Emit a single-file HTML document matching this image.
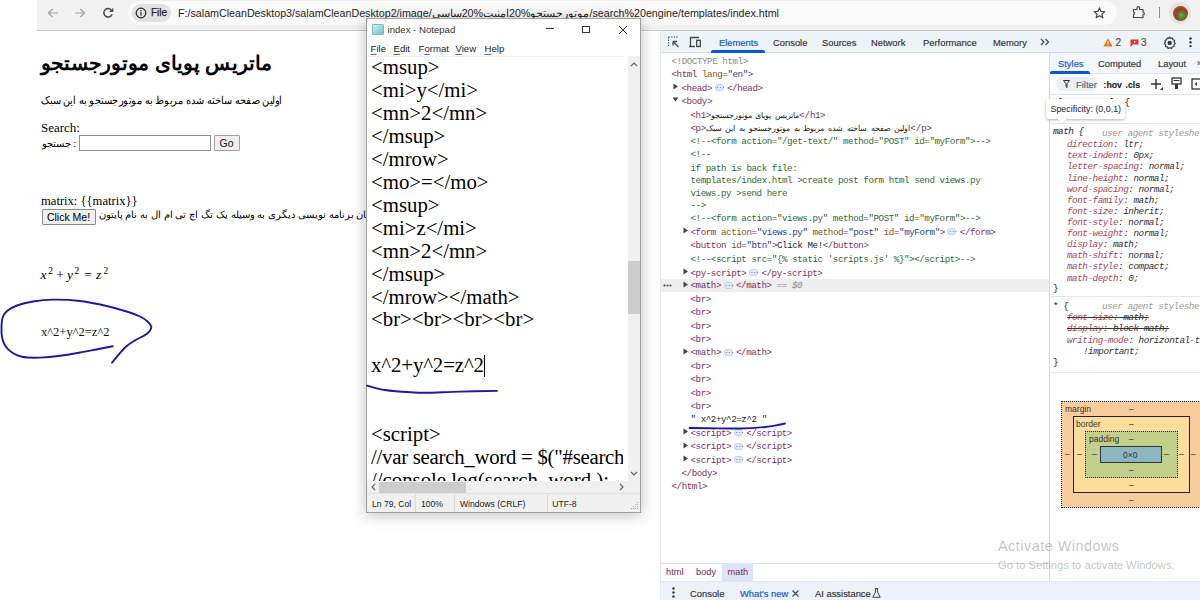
<!DOCTYPE html>
<html><head><meta charset="utf-8">
<style>
*{margin:0;padding:0;box-sizing:border-box}
html,body{width:1200px;height:600px;overflow:hidden;background:#fff;position:relative;font-family:"Liberation Sans",sans-serif}
.a{position:absolute;white-space:nowrap}
/* browser toolbar */
#tb{left:37px;top:0;width:1163px;height:31px;background:#f1f1f1;border-bottom:1px solid #c9c9c9}
#omni{left:91px;top:1px;width:989px;height:24px;background:#f9f9f9;border-radius:12px}
#chip{left:95px;top:4px;width:39px;height:18px;background:#e1e1e1;border-radius:9px}
.url{font-size:10.7px;color:#1f1f1f;top:7px;left:178px}
/* page */
.iso{unicode-bidi:isolate}
.serif{font-family:"Liberation Serif",serif}
/* notepad */
#np{left:365.5px;top:18px;width:275.5px;height:495px;background:#fff;border:1px solid #a0a0a0;box-shadow:0 2px 14px rgba(0,0,0,.26)}
.npm{font-size:9.6px;color:#222}
.npm u{text-decoration-thickness:0.6px;text-underline-offset:1.5px;text-decoration-color:#666}
.nps{font-size:8.6px;color:#222}
.npt{font-family:"Liberation Serif",serif;font-size:20.8px;color:#000;left:6px}
/* devtools */
#dt{left:660px;top:31px;width:540px;height:569px;background:#fff;border-left:1px solid #e6ebef}
.mono{font-family:"Liberation Mono",monospace;font-size:9.2px;letter-spacing:-0.43px}
.dtab{font-size:9.4px;color:#333;-webkit-text-stroke:0.15px currentColor}
.r{line-height:13.277px}
.dots{display:inline-block;width:9px;height:7px;margin:0 3.5px 0 2.5px;vertical-align:1.5px;background:#e3eaf7;border:1px solid #c5d3ea;border-radius:3px;font-size:6px;line-height:5px;text-align:center;color:#2b5fb6;font-weight:bold;letter-spacing:-0.5px}
.arx{font-family:"Liberation Sans",sans-serif;color:#222}
.tx{color:#1f1f1f}
.tg{color:#7a2f63}.at{color:#8a5322}.av{color:#1d3f8f}.cm{color:#2f6b34}.gr{color:#8a8a8a}
.sp{font-family:"Liberation Mono",monospace;font-size:9.3px;letter-spacing:-0.47px;font-style:italic;line-height:11.2px}
.pn{color:#b0445a}.pv{color:#303030}
.bc{font-size:9.3px;color:#80245f}
.bm{font-size:8.5px;color:#333}
</style></head><body>

<!-- ============ BROWSER TOOLBAR ============ -->
<div id="tb" class="a">
  <div id="omni" class="a"></div>
</div>
<div class="a url">F:/salamCleanDesktop3/salamCleanDesktop2/image/موتورجستجو%20امنیت%20ساسی/search%20engine/templates/index.html</div>

<!-- ============ PAGE ============ -->
<div class="a" id="h1" style="left:41px;top:50.5px;font-size:20px;transform:scaleX(1.02);transform-origin:0 0;font-weight:bold;color:#000">ماتریس پویای موتورجستجو</div>
<div class="a" id="p1" style="left:41px;top:94px;font-size:10.8px;transform:scaleX(0.893);transform-origin:0 0;color:#000">اولین صفحه ساخته شده مربوط به موتورجستجو به این سبک</div>
<div class="a serif" id="srch" style="left:41px;top:120px;font-size:13px;color:#000">Search:</div>
<div class="a" id="jst" style="left:41.5px;top:138px;font-size:9.6px;color:#000">جستجو :</div>
<div class="a" id="inp" style="left:79px;top:135px;width:132px;height:16px;border:1px solid #8f8f8f;background:#fff"></div>
<div class="a" id="go" style="left:213.5px;top:135px;width:26px;height:16px;border:1px solid #a0a0a0;background:#efefef;border-radius:1px;font-size:10.5px;text-align:center;line-height:14px;color:#111">Go</div>
<div class="a serif" id="mtx" style="left:41px;top:194px;font-size:12.6px;color:#000">matrix: {{matrix}}</div>
<div class="a" id="clk" style="left:41.5px;top:208.5px;width:54px;height:16px;border:1px solid #8a8a8a;background:#efefef;border-radius:1px;font-size:10.5px;text-align:center;line-height:14px;color:#000">Click Me!</div>
<div class="a" id="ar2" style="left:98.5px;top:208.5px;font-size:10px;color:#000;direction:rtl;unicode-bidi:isolate">زبان برنامه نویسی دیگری به وسیله یک تگ اچ تی ام ال به نام پایتون</div>
<div id="math"><div class="a serif" style="left:40.5px;top:267.69px;font-size:13.5px;line-height:13.5px;font-style:italic;color:#000">x</div><div class="a serif" style="left:48.3px;top:265.93px;font-size:9.4px;line-height:9.4px;color:#000;margin-top:0.8px">2</div><div class="a serif" style="left:56.3px;top:267.69px;font-size:13.5px;line-height:13.5px;color:#000">+</div><div class="a serif" style="left:67px;top:267.69px;font-size:13.5px;line-height:13.5px;font-style:italic;color:#000">y</div><div class="a serif" style="left:74.6px;top:265.93px;font-size:9.4px;line-height:9.4px;color:#000;margin-top:0.8px">2</div><div class="a serif" style="left:84.3px;top:267.69px;font-size:13.5px;line-height:13.5px;color:#000">=</div><div class="a serif" style="left:96px;top:267.69px;font-size:13.5px;line-height:13.5px;font-style:italic;color:#000">z</div><div class="a serif" style="left:103.6px;top:265.93px;font-size:9.4px;line-height:9.4px;color:#000;margin-top:0.8px">2</div></div>
<div class="a serif" id="txt" style="left:41px;top:324.5px;font-size:12.5px;color:#111">x^2+y^2=z^2</div>

<!-- ============ NOTEPAD ============ -->
<div id="np" class="a">
  <div class="a" style="left:5px;top:5px;width:12px;height:11px;background:linear-gradient(135deg,#cfeef2,#6fc3cf);border:1px solid #7fb7c3;border-radius:1px"></div>
  <div class="a" style="left:21px;top:5px;font-size:9.6px;color:#333">index - Notepad</div>
  <div class="a" style="left:179px;top:9px;width:8px;height:1px;background:#333"></div>
  <div class="a" style="left:215px;top:7px;width:8px;height:7px;border:1px solid #333"></div>
  <svg class="a" style="left:251px;top:6px" width="10" height="10" viewBox="0 0 10 10"><path d="M1 1L9 9M9 1L1 9" stroke="#333" stroke-width="1" fill="none"/></svg>
  <div class="a npm" style="left:4px;top:24px"><u>F</u>ile</div>
  <div class="a npm" style="left:27px;top:24px"><u>E</u>dit</div>
  <div class="a npm" style="left:52px;top:24px">F<u>o</u>rmat</div>
  <div class="a npm" style="left:89px;top:24px"><u>V</u>iew</div>
  <div class="a npm" style="left:118px;top:24px"><u>H</u>elp</div>
  <div class="a" style="left:0;top:37px;width:272px;height:1px;background:#f0f0f0"></div>
  <div class="a" id="npc" style="left:0;top:37px;width:256px;height:425px;overflow:hidden">
    <div class="npt" style="position:absolute;left:4.5px;top:0px;line-height:22.95px;white-space:pre">&lt;msup&gt;
&lt;mi&gt;y&lt;/mi&gt;
&lt;mn&gt;2&lt;/mn&gt;
&lt;/msup&gt;
&lt;/mrow&gt;
&lt;mo&gt;=&lt;/mo&gt;
&lt;msup&gt;
&lt;mi&gt;z&lt;/mi&gt;
&lt;mn&gt;2&lt;/mn&gt;
&lt;/msup&gt;
&lt;/mrow&gt;&lt;/math&gt;
&lt;br&gt;&lt;br&gt;&lt;br&gt;&lt;br&gt;

<span style="letter-spacing:-0.1px">x^2+y^2=z^2</span>


&lt;script&gt;
<span style="letter-spacing:-0.26px">//var search_word = $("#search_word").val();</span>
//console.log(search_word );</div>
    <div class="a" id="caret" style="left:117px;top:298.5px;width:1px;height:22px;background:#000"></div>
  </div>
  <!-- v scrollbar -->
  <div class="a" style="left:261px;top:37px;width:12px;height:425px;background:#f0f0f0"></div>
  <svg class="a" style="left:263px;top:42px" width="8" height="6" viewBox="0 0 8 6"><path d="M1 5L4 2L7 5" stroke="#606060" stroke-width="1.1" fill="none"/></svg>
  <div class="a" style="left:261px;top:242px;width:12px;height:53px;background:#cdcdcd"></div>
  <svg class="a" style="left:263px;top:452px" width="8" height="6" viewBox="0 0 8 6"><path d="M1 1L4 4L7 1" stroke="#606060" stroke-width="1.1" fill="none"/></svg>
  <div class="a" style="left:256px;top:37px;width:5px;height:425px;background:#fff"></div>
  <!-- h scrollbar -->
  <div class="a" style="left:0;top:462px;width:273px;height:12px;background:#f0f0f0"></div>
  <svg class="a" style="left:3px;top:464px" width="6" height="8" viewBox="0 0 6 8"><path d="M5 1L2 4L5 7" stroke="#606060" stroke-width="1.1" fill="none"/></svg>
  <div class="a" style="left:12px;top:463px;width:87px;height:11px;background:#cdcdcd"></div>
  <svg class="a" style="left:252px;top:464px" width="6" height="8" viewBox="0 0 6 8"><path d="M1 1L4 4L1 7" stroke="#606060" stroke-width="1.1" fill="none"/></svg>
  <!-- status bar -->
  <div class="a" style="left:0;top:474px;width:273px;height:19px;background:#f0f0f0;border-top:1px solid #e2e2e2"></div>
  <div class="a nps" style="left:5.5px;top:480px">Ln 79, Col</div>
  <div class="a" style="left:48px;top:475px;width:1px;height:18px;background:#dadada"></div>
  <div class="a nps" style="left:54.5px;top:480px">100%</div>
  <div class="a" style="left:87px;top:475px;width:1px;height:18px;background:#dadada"></div>
  <div class="a nps" style="left:93.5px;top:480px">Windows (CRLF)</div>
  <div class="a" style="left:180px;top:475px;width:1px;height:18px;background:#dadada"></div>
  <div class="a nps" style="left:185.7px;top:480px">UTF-8</div>
  <svg class="a" style="left:264px;top:482px" width="8" height="9" viewBox="0 0 8 9"><g fill="#a8a8a8"><rect x="6" y="1" width="1" height="1"/><rect x="4" y="3" width="1" height="1"/><rect x="6" y="3" width="1" height="1"/><rect x="2" y="5" width="1" height="1"/><rect x="4" y="5" width="1" height="1"/><rect x="6" y="5" width="1" height="1"/><rect x="0" y="7" width="1" height="1"/><rect x="2" y="7" width="1" height="1"/><rect x="4" y="7" width="1" height="1"/><rect x="6" y="7" width="1" height="1"/></g></svg>
</div>

<!-- ============ DEVTOOLS ============ -->
<div id="dt" class="a"></div>
<!-- tab bar -->
<div class="a" style="left:661px;top:31px;width:539px;height:22px;background:#eef2f9;border-bottom:1px solid #d5dbe5"></div>
<div class="a" style="left:711px;top:50px;width:54px;height:3px;background:#0b57d0;border-radius:2px 2px 0 0"></div>
<div class="a dtab" style="left:719px;top:37px;color:#0b57d0">Elements</div>
<div class="a dtab" style="left:773px;top:37px">Console</div>
<div class="a dtab" style="left:822px;top:37px">Sources</div>
<div class="a dtab" style="left:871px;top:37px">Network</div>
<div class="a dtab" style="left:923px;top:37px">Performance</div>
<div class="a dtab" style="left:993px;top:37px">Memory</div>
<!-- elements tree -->
<!-- styles pane -->
<div class="a" style="left:1049px;top:53px;width:1px;height:528px;background:#d5dbe5"></div>
<div class="a" style="left:1050px;top:53px;width:150px;height:21px;background:#f3f6fb;border-bottom:1px solid #dde3ec"></div>
<div class="a" style="left:1050px;top:71px;width:40px;height:3px;background:#0b57d0;border-radius:2px 2px 0 0"></div>
<div class="a dtab" style="left:1058px;top:58px;color:#0b57d0">Styles</div>
<div class="a dtab" style="left:1098px;top:58px">Computed</div>
<div class="a dtab" style="left:1158px;top:58px">Layout</div>
<div class="a dtab" style="left:1197px;top:57px">&raquo;</div>
<div class="a" style="left:1050px;top:94px;width:150px;height:1px;background:#dde3ec"></div>
<div class="a" style="left:1056px;top:77px;width:42px;height:14px;background:#e9eef7;border-radius:7px"></div>
<svg class="a" style="left:1063px;top:80px" width="7" height="8" viewBox="0 0 7 8"><path d="M0.5 0.5H6.5L4 3.8V7.5L3 6.8V3.8Z" fill="none" stroke="#333" stroke-width="1"/></svg>
<div class="a dtab" style="left:1076px;top:79px;color:#5f6368">Filter</div>
<div class="a dtab" style="left:1103.5px;top:79.5px;color:#222;font-size:8.7px;font-weight:bold">:hov</div>
<div class="a dtab" style="left:1125.5px;top:79.5px;color:#222;font-size:8.7px;font-weight:bold">.cls</div>
<svg class="a" style="left:1150px;top:78px" width="14" height="13" viewBox="0 0 14 13"><path d="M6 1V11M1 6H11" stroke="#333" stroke-width="1.4"/><path d="M13 9V12H10Z" fill="#333"/></svg>
<svg class="a" style="left:1171px;top:77px" width="11" height="13" viewBox="0 0 11 13"><rect x="1" y="1" width="9" height="6" fill="none" stroke="#333" stroke-width="1.3"/><path d="M2.5 3.5H8.5" stroke="#333"/><rect x="4" y="7" width="3" height="5" fill="#333"/></svg>
<svg class="a" style="left:1191px;top:78px" width="10" height="12" viewBox="0 0 10 12"><rect x="1" y="1" width="12" height="10" fill="none" stroke="#333" stroke-width="1.3"/><path d="M6 4L3.5 6L6 8Z" fill="#333"/></svg>
<div class="a sp" style="left:1053px;top:97px;color:#222;font-style:normal">element.style {</div>
<div class="a" style="left:1050px;top:123px;width:150px;height:1px;background:#e2e6ed"></div>
<!-- tooltip -->
<div class="a" style="left:1046px;top:99px;width:79px;height:20px;background:#fff;border-radius:3px;box-shadow:0 1px 3px rgba(0,0,0,.3)"></div>
<svg class="a" style="left:1056px;top:118px" width="12" height="6" viewBox="0 0 12 6"><path d="M0 0L6 6L12 0Z" fill="#fff"/><path d="M0 0L6 6L12 0" fill="none" stroke="#d0d0d0" stroke-width="0.6"/></svg>
<div class="a" style="left:1050.5px;top:103.5px;font-size:8.9px;color:#222">Specificity: (0,0,1)</div>
<!-- math rule -->
<div class="a sp" style="left:1053px;top:125.5px;color:#222">math {</div>
<div class="a sp" style="left:1102px;top:127.5px;color:#9a9a9a">user agent styleshe</div>
<div class="a sp" style="left:1067px;top:139.1px"><span class="pn">direction</span><span class="pv">: ltr;</span></div>
<div class="a sp" style="left:1067px;top:150.2px"><span class="pn">text-indent</span><span class="pv">: 0px;</span></div>
<div class="a sp" style="left:1067px;top:161.3px"><span class="pn">letter-spacing</span><span class="pv">: normal;</span></div>
<div class="a sp" style="left:1067px;top:172.5px"><span class="pn">line-height</span><span class="pv">: normal;</span></div>
<div class="a sp" style="left:1067px;top:183.6px"><span class="pn">word-spacing</span><span class="pv">: normal;</span></div>
<div class="a sp" style="left:1067px;top:194.7px"><span class="pn">font-family</span><span class="pv">: math;</span></div>
<div class="a sp" style="left:1067px;top:205.8px"><span class="pn">font-size</span><span class="pv">: inherit;</span></div>
<div class="a sp" style="left:1067px;top:216.9px"><span class="pn">font-style</span><span class="pv">: normal;</span></div>
<div class="a sp" style="left:1067px;top:228.1px"><span class="pn">font-weight</span><span class="pv">: normal;</span></div>
<div class="a sp" style="left:1067px;top:239.2px"><span class="pn">display</span><span class="pv">: math;</span></div>
<div class="a sp" style="left:1067px;top:250.3px"><span class="pn">math-shift</span><span class="pv">: normal;</span></div>
<div class="a sp" style="left:1067px;top:261.4px"><span class="pn">math-style</span><span class="pv">: compact;</span></div>
<div class="a sp" style="left:1067px;top:272.5px"><span class="pn">math-depth</span><span class="pv">: 0;</span></div>
<div class="a sp" style="left:1053px;top:283px;color:#222;font-style:normal">}</div>
<div class="a" style="left:1050px;top:296px;width:150px;height:1px;background:#e2e6ed"></div>
<div class="a sp" style="left:1053px;top:301px;color:#222;font-style:normal">* {</div>
<div class="a sp" style="left:1102px;top:301px;color:#9a9a9a">user agent styleshe</div>
<div class="a sp" style="left:1067px;top:312.3px;text-decoration:line-through;text-decoration-color:#333"><span class="pn">font-size</span><span class="pv">: math;</span></div>
<div class="a sp" style="left:1067px;top:323.4px;text-decoration:line-through;text-decoration-color:#333"><span class="pn">display</span><span class="pv">: block math;</span></div>
<div class="a sp" style="left:1067px;top:335.2px"><span class="pn">writing-mode</span><span class="pv">: horizontal-tb</span></div>
<div class="a sp" style="left:1083px;top:345.6px"><span class="pv">!important;</span></div>
<div class="a sp" style="left:1053px;top:356.7px;color:#222;font-style:normal">}</div>
<div class="a" style="left:1050px;top:372px;width:150px;height:1px;background:#e2e6ed"></div>
<!-- box model -->
<div class="a" style="left:1061px;top:401px;width:150px;height:107px;background:#f9cc9d;border:1px dotted #222"></div>
<div class="a" style="left:1073px;top:416px;width:117px;height:77px;background:#fddd9b;border:1px solid #222"></div>
<div class="a" style="left:1085px;top:431px;width:93px;height:47px;background:#c3d08b;border:1px dotted #222"></div>
<div class="a" style="left:1100px;top:446px;width:62px;height:17px;background:#8cb6c0;border:1px solid #333"></div>
<div class="a bm" style="left:1065px;top:404px">margin</div>
<div class="a bm" style="left:1076px;top:419px">border</div>
<div class="a bm" style="left:1089px;top:434px">padding</div>
<div class="a bm" style="left:1123px;top:450px">0&times;0</div>
<div class="a bm" style="left:1129px;top:404px">&ndash;</div>
<div class="a bm" style="left:1129px;top:419px">&ndash;</div>
<div class="a bm" style="left:1129px;top:434px">&ndash;</div>
<div class="a bm" style="left:1129px;top:465px">&ndash;</div>
<div class="a bm" style="left:1129px;top:480px">&ndash;</div>
<div class="a bm" style="left:1129px;top:495px">&ndash;</div>
<div class="a bm" style="left:1065px;top:449px">&ndash;</div>
<div class="a bm" style="left:1077px;top:449px">&ndash;</div>
<div class="a bm" style="left:1092px;top:449px">&ndash;</div>
<div class="a bm" style="left:1164px;top:449px">&ndash;</div>
<div class="a bm" style="left:1179px;top:449px">&ndash;</div>
<div class="a bm" style="left:1191px;top:449px">&ndash;</div>
<!-- breadcrumbs -->
<div class="a" style="left:661px;top:563px;width:388px;height:1px;background:#dde3ec"></div>
<div class="a" style="left:722px;top:564px;width:31px;height:17px;background:#dbe5f7"></div>
<div class="a bc" style="left:666px;top:567px">html</div>
<div class="a bc" style="left:696px;top:567px">body</div>
<div class="a bc" style="left:727.5px;top:567px">math</div>
<!-- drawer -->
<div class="a" style="left:661px;top:581px;width:539px;height:19px;background:#edf1f9;border-top:1px solid #e3e8f0"></div>
<svg class="a" style="left:672px;top:587px" width="3" height="11" viewBox="0 0 3 11"><circle cx="1.5" cy="1.5" r="1.2" fill="#333"/><circle cx="1.5" cy="5.5" r="1.2" fill="#333"/><circle cx="1.5" cy="9.5" r="1.2" fill="#333"/></svg>
<div class="a dtab" style="left:690px;top:588px">Console</div>
<div class="a dtab" style="left:740px;top:588px;color:#0b57d0">What's new</div>
<svg class="a" style="left:792px;top:590px" width="7" height="7" viewBox="0 0 7 7"><path d="M0.5 0.5L6.5 6.5M6.5 0.5L0.5 6.5" stroke="#444" stroke-width="1.1"/></svg>
<div class="a dtab" style="left:815px;top:588px">AI assistance</div>
<svg class="a" style="left:872px;top:588px" width="9" height="10" viewBox="0 0 9 10"><path d="M3 0.5H6M3.5 0.5V4L0.8 9.3H8.2L5.5 4V0.5" fill="none" stroke="#444" stroke-width="1"/></svg>
<!-- activate windows -->
<div class="a" id="aw1" style="left:998px;top:538px;font-size:14.4px;letter-spacing:0.5px;color:rgba(140,140,140,.5)">Activate Windows</div>
<div class="a" id="aw2" style="left:998px;top:558.5px;font-size:11.2px;color:rgba(140,140,140,.5)">Go to Settings to activate Windows.</div>
<!-- toolbar icons -->
<svg class="a" style="left:47px;top:7px" width="12" height="12" viewBox="0 0 12 12"><path d="M11 6H1.5M5.5 2L1.5 6L5.5 10" fill="none" stroke="#a3a3a3" stroke-width="1.2"/></svg>
<svg class="a" style="left:74px;top:7px" width="12" height="12" viewBox="0 0 12 12"><path d="M1 6H10.5M6.5 2L10.5 6L6.5 10" fill="none" stroke="#a3a3a3" stroke-width="1.2"/></svg>
<svg class="a" style="left:102px;top:7px" width="13" height="12" viewBox="0 0 13 12"><path d="M10.2 7.2A4.3 4.3 0 1 1 9.3 2.8" fill="none" stroke="#474747" stroke-width="1.5"/><path d="M11.3 0.8V5H7.1Z" fill="#474747"/></svg>
<div class="a" style="left:132px;top:4px;width:39px;height:18px;background:#e2e2e2;border-radius:9px"></div>
<svg class="a" style="left:135px;top:7px" width="12" height="12" viewBox="0 0 12 12"><circle cx="6" cy="6" r="4.8" fill="none" stroke="#2a2a2a" stroke-width="1.2"/><rect x="5.4" y="5" width="1.2" height="3.6" fill="#2a2a2a"/><rect x="5.4" y="3" width="1.2" height="1.2" fill="#2a2a2a"/></svg>
<div class="a" style="left:151px;top:7px;font-size:10px;color:#1f1f1f;-webkit-text-stroke:0.25px #1f1f1f">File</div>
<svg class="a" style="left:1093px;top:7px" width="13" height="12" viewBox="0 0 13 12"><path d="M6.5 0.9L8 4.4L11.7 4.7L8.9 7.1L9.8 10.8L6.5 8.8L3.2 10.8L4.1 7.1L1.3 4.7L5 4.4Z" fill="none" stroke="#474747" stroke-width="1.2" stroke-linejoin="round"/></svg>
<svg class="a" style="left:1132px;top:6px" width="14" height="13" viewBox="0 0 14 13"><path d="M1.5 3.5H5V2A1.3 1.3 0 0 1 7.6 2V3.5H11V6.2A1.3 1.3 0 0 1 11 8.8V11.5H1.5V8.6A1.4 1.4 0 0 0 1.5 6Z" fill="none" stroke="#474747" stroke-width="1.2" stroke-linejoin="round"/></svg>
<div class="a" style="left:1158.5px;top:7px;width:1.2px;height:11px;background:#8a8a8a"></div>
<div class="a" style="left:1169px;top:2px;width:22px;height:22px;border-radius:50%;background:#e4e4e4"></div>
<div class="a" style="left:1172.5px;top:5.5px;width:15px;height:15px;border-radius:50%;background:radial-gradient(circle at 58% 62%,#7fb04a 0,#4f8a2e 22%,#9c3a22 48%,#b9472a 70%,#4a2418 100%)"></div>
<!-- devtools tab icons -->
<svg class="a" style="left:667px;top:36px" width="13" height="12" viewBox="0 0 13 12"><path d="M1.5 1H11.5M1.5 1V11" fill="none" stroke="#474747" stroke-width="1.1" stroke-dasharray="1.3 1.3"/><path d="M11.5 11L6 5.5M6 5.5H10M6 5.5V9.5" fill="none" stroke="#474747" stroke-width="1.3"/></svg>
<svg class="a" style="left:688px;top:36px" width="14" height="12" viewBox="0 0 14 12"><path d="M11 1.5H2.5V10.5M1 10.5H7" fill="none" stroke="#474747" stroke-width="1.3"/><rect x="8.7" y="4.3" width="3.6" height="6.2" fill="none" stroke="#474747" stroke-width="1.3"/></svg>
<svg class="a" style="left:1040px;top:38px" width="10" height="8" viewBox="0 0 10 8"><path d="M1 1L4 4L1 7M5.5 1L8.5 4L5.5 7" fill="none" stroke="#474747" stroke-width="1.2"/></svg>
<svg class="a" style="left:1103px;top:38px" width="10" height="9" viewBox="0 0 10 9"><path d="M5 0.5L9.6 8.5H0.4Z" fill="#e8710a"/><rect x="4.5" y="3" width="1" height="2.8" fill="#fff"/><rect x="4.5" y="6.5" width="1" height="1" fill="#fff"/></svg>
<div class="a dtab" style="left:1115.5px;top:36.5px;font-size:10px;color:#474747">2</div>
<svg class="a" style="left:1130px;top:39px" width="9" height="8" viewBox="0 0 9 8"><path d="M0.5 0.5H8.5V5.5H3L0.5 7.8Z" fill="#dc362e"/><rect x="4" y="2" width="1.2" height="1.8" fill="#fff"/></svg>
<div class="a dtab" style="left:1141px;top:36.5px;font-size:10px;color:#5a4a55">3</div>
<svg class="a" style="left:1163px;top:35.5px" width="13" height="13" viewBox="0 0 13 13"><path d="M6.5 1L7.6 2.4L9.4 2L9.9 3.7L11.6 4.3L11.2 6.1L12.3 7.4L11 8.7L11.2 10.5L9.4 10.8L8.5 12.4L6.8 11.7L5.1 12.4L4.2 10.8L2.4 10.5L2.6 8.7L1.3 7.4L2.4 6.1L2 4.3L3.7 3.7L4.2 2L6 2.4Z" fill="none" stroke="#3a3a3a" stroke-width="1.2" stroke-linejoin="round"/><circle cx="6.7" cy="6.9" r="2.2" fill="#3a3a3a"/></svg>
<svg class="a" style="left:1189px;top:37px" width="3" height="11" viewBox="0 0 3 11"><circle cx="1.5" cy="1.5" r="1.2" fill="#333"/><circle cx="1.5" cy="5.3" r="1.2" fill="#333"/><circle cx="1.5" cy="9.1" r="1.2" fill="#333"/></svg>
<!--ROWS-->
<div class="a" style="left:661px;top:279.00px;width:388px;height:13.28px;background:#eeeeee"></div>
<svg class="a" style="left:662.5px;top:284.00px" width="9" height="3" viewBox="0 0 9 3"><circle cx="1.5" cy="1.5" r="1.05" fill="#444"/><circle cx="4.5" cy="1.5" r="1.05" fill="#444"/><circle cx="7.5" cy="1.5" r="1.05" fill="#444"/></svg>
<div class="a mono r" style="left:671.5px;top:55.41px;"><span class="gr">&lt;!DOCTYPE html&gt;</span></div>
<div class="a mono r" style="left:671.5px;top:68.41px;"><span class="tg">&lt;html</span> <span class="at">lang</span><span class="tg">=</span><span class="av">"en"</span><span class="tg">&gt;</span></div>
<svg class="a" style="left:673px;top:83.00px" width="6" height="7" viewBox="0 0 6 7"><path d="M0.5 0.5L5 3.5L0.5 6.5Z" fill="#444"/></svg>
<div class="a mono r" style="left:681.5px;top:81.91px;"><span class="tg">&lt;head&gt;</span><span class="dots">&middot;&middot;&middot;</span><span class="tg">&lt;/head&gt;</span></div>
<svg class="a" style="left:672px;top:96.50px" width="7" height="6" viewBox="0 0 7 6"><path d="M0.5 0.5L6.5 0.5L3.5 4.5Z" fill="#444"/></svg>
<div class="a mono r" style="left:681.5px;top:95.41px;"><span class="tg">&lt;body&gt;</span></div>
<div class="a mono r" style="left:690.5px;top:108.91px;"><span class="tg">&lt;h1&gt;</span><span class="arx" style="font-size:8px;word-spacing:1.3px">ماتریس پویای موتورجستجو</span><span class="tg">&lt;/h1&gt;</span></div>
<div class="a mono r" style="left:690.5px;top:121.91px;"><span class="tg">&lt;p&gt;</span><span class="arx" style="font-size:8px;word-spacing:1.5px">اولین صفحه ساخته شده مربوط به موتورجستجو به این سبک</span><span class="tg">&lt;/p&gt;</span></div>
<div class="a mono r" style="left:690.5px;top:135.41px;"><span class="cm">&lt;!--&lt;form action="/get-text/" method="POST" id="myForm"&gt;--&gt;</span></div>
<div class="a mono r" style="left:690.5px;top:148.41px;"><span class="cm">&lt;!--</span></div>
<div class="a mono r" style="left:690.5px;top:161.91px;"><span class="cm">if path is back file:</span></div>
<div class="a mono r" style="left:690.5px;top:174.21px;"><span class="cm">templates/index.html &gt;create post form html send views.py</span></div>
<div class="a mono r" style="left:690.5px;top:186.71px;"><span class="cm">views.py &gt;send here</span></div>
<div class="a mono r" style="left:690.5px;top:199.41px;"><span class="cm">--&gt;</span></div>
<div class="a mono r" style="left:690.5px;top:212.41px;"><span class="cm">&lt;!--&lt;form action="views.py" method="POST" id="myForm"&gt;--&gt;</span></div>
<svg class="a" style="left:683px;top:227.00px" width="6" height="7" viewBox="0 0 6 7"><path d="M0.5 0.5L5 3.5L0.5 6.5Z" fill="#444"/></svg>
<div class="a mono r" style="left:690.5px;top:225.91px;"><span class="tg">&lt;form</span> <span class="at">action</span><span class="tg">=</span><span class="av">"views.py"</span> <span class="at">method</span><span class="tg">=</span><span class="av">"post"</span> <span class="at">id</span><span class="tg">=</span><span class="av">"myForm"</span><span class="tg">&gt;</span><span class="dots">&middot;&middot;&middot;</span><span class="tg">&lt;/form&gt;</span></div>
<div class="a mono r" style="left:690.5px;top:239.41px;"><span class="tg">&lt;button</span> <span class="at">id</span><span class="tg">=</span><span class="av">"btn"</span><span class="tg">&gt;</span><span class="tx">Click Me!</span><span class="tg">&lt;/button&gt;</span></div>
<div class="a mono r" style="left:690.5px;top:252.91px;"><span class="cm">&lt;!--&lt;script src="{% static 'scripts.js' %}"&gt;&lt;/script&gt;--&gt;</span></div>
<svg class="a" style="left:683px;top:267.70px" width="6" height="7" viewBox="0 0 6 7"><path d="M0.5 0.5L5 3.5L0.5 6.5Z" fill="#444"/></svg>
<div class="a mono r" style="left:690.5px;top:266.61px;"><span class="tg">&lt;py-script&gt;</span><span class="dots">&middot;&middot;&middot;</span><span class="tg">&lt;/py-script&gt;</span></div>
<svg class="a" style="left:683px;top:280.50px" width="6" height="7" viewBox="0 0 6 7"><path d="M0.5 0.5L5 3.5L0.5 6.5Z" fill="#444"/></svg>
<div class="a mono r" style="left:690.5px;top:279.41px;"><span class="tg">&lt;math&gt;</span><span class="dots">&middot;&middot;&middot;</span><span class="tg">&lt;/math&gt;</span> <span class="gr" style="font-style:italic">== $0</span></div>
<div class="a mono r" style="left:690.5px;top:292.91px;"><span class="tg">&lt;br&gt;</span></div>
<div class="a mono r" style="left:690.5px;top:306.21px;"><span class="tg">&lt;br&gt;</span></div>
<div class="a mono r" style="left:690.5px;top:319.51px;"><span class="tg">&lt;br&gt;</span></div>
<div class="a mono r" style="left:690.5px;top:332.91px;"><span class="tg">&lt;br&gt;</span></div>
<svg class="a" style="left:683px;top:347.50px" width="6" height="7" viewBox="0 0 6 7"><path d="M0.5 0.5L5 3.5L0.5 6.5Z" fill="#444"/></svg>
<div class="a mono r" style="left:690.5px;top:346.41px;"><span class="tg">&lt;math&gt;</span><span class="dots">&middot;&middot;&middot;</span><span class="tg">&lt;/math&gt;</span></div>
<div class="a mono r" style="left:690.5px;top:359.91px;"><span class="tg">&lt;br&gt;</span></div>
<div class="a mono r" style="left:690.5px;top:373.21px;"><span class="tg">&lt;br&gt;</span></div>
<div class="a mono r" style="left:690.5px;top:386.51px;"><span class="tg">&lt;br&gt;</span></div>
<div class="a mono r" style="left:690.5px;top:399.51px;"><span class="tg">&lt;br&gt;</span></div>
<div class="a mono r" style="left:690.5px;top:413.11px;"><span class="tx">" x^2+y^2=z^2 "</span></div>
<svg class="a" style="left:683px;top:428.00px" width="6" height="7" viewBox="0 0 6 7"><path d="M0.5 0.5L5 3.5L0.5 6.5Z" fill="#444"/></svg>
<div class="a mono r" style="left:690.5px;top:426.91px;"><span class="tg">&lt;script&gt;</span><span class="dots">&middot;&middot;&middot;</span><span class="tg">&lt;/script&gt;</span></div>
<svg class="a" style="left:683px;top:441.50px" width="6" height="7" viewBox="0 0 6 7"><path d="M0.5 0.5L5 3.5L0.5 6.5Z" fill="#444"/></svg>
<div class="a mono r" style="left:690.5px;top:440.41px;"><span class="tg">&lt;script&gt;</span><span class="dots">&middot;&middot;&middot;</span><span class="tg">&lt;/script&gt;</span></div>
<svg class="a" style="left:683px;top:454.80px" width="6" height="7" viewBox="0 0 6 7"><path d="M0.5 0.5L5 3.5L0.5 6.5Z" fill="#444"/></svg>
<div class="a mono r" style="left:690.5px;top:453.71px;"><span class="tg">&lt;script&gt;</span><span class="dots">&middot;&middot;&middot;</span><span class="tg">&lt;/script&gt;</span></div>
<div class="a mono r" style="left:681.5px;top:467.21px;"><span class="tg">&lt;/body&gt;</span></div>
<div class="a mono r" style="left:671.5px;top:480.41px;"><span class="tg">&lt;/html&gt;</span></div>
<!--/ROWS-->
<!--ANN-->
<svg class="a" style="left:0;top:0;z-index:50" width="1200" height="600" viewBox="0 0 1200 600"><g fill="none" stroke="#1d1aa0" stroke-width="1.9" stroke-linecap="round" stroke-linejoin="round"><path d="M112.7 346.3 C110.6 346.7 105.5 347.7 100.0 348.7 C94.5 349.7 86.7 351.3 80.0 352.5 C73.3 353.7 66.7 354.9 60.0 355.8 C53.3 356.7 46.3 357.4 40.0 357.6 C33.7 357.8 26.7 357.7 22.0 356.8 C17.3 355.9 14.8 354.4 12.0 352.5 C9.2 350.6 6.7 348.1 5.0 345.5 C3.3 342.9 2.6 340.1 2.0 337.0 C1.4 333.9 1.4 330.2 1.5 327.0 C1.6 323.8 1.6 320.7 2.5 318.0 C3.4 315.3 4.6 313.1 7.0 311.0 C9.4 308.9 12.7 307.1 17.0 305.5 C21.3 303.9 26.9 302.5 33.0 301.5 C39.0 300.5 45.5 299.7 53.3 299.6 C61.1 299.5 71.1 299.9 80.0 301.0 C88.9 302.1 98.9 304.2 106.7 306.0 C114.5 307.8 121.2 309.8 126.7 311.5 C132.2 313.2 136.5 314.8 140.0 316.5 C143.5 318.2 145.6 319.7 147.5 321.5 C149.4 323.3 151.4 325.2 151.3 327.3 C151.2 329.4 149.2 331.9 146.7 334.0 C144.1 336.1 139.6 337.6 136.0 339.8 C132.4 342.0 129.3 343.5 125.3 347.3 C121.3 351.1 114.2 360.1 112.0 362.7"/><path d="M366.9 385.6 C369.9 386.3 377.8 388.9 385.0 390.0 C392.2 391.1 402.7 391.8 410.0 392.2 C417.3 392.7 420.4 392.9 428.8 392.8 C437.1 392.6 448.6 391.9 460.0 391.6 C471.4 391.3 490.8 391.0 496.9 390.9"/><path d="M689.5 428.0 C692.9 428.1 701.6 428.2 710.0 428.3 C718.4 428.4 730.8 428.7 740.0 428.5 C749.2 428.3 758.7 427.6 765.0 427.0 C771.3 426.4 774.7 425.6 778.0 425.0 C781.3 424.4 783.8 423.8 785.0 423.5"/></g></svg>
<!--/ANN-->
</body></html>
